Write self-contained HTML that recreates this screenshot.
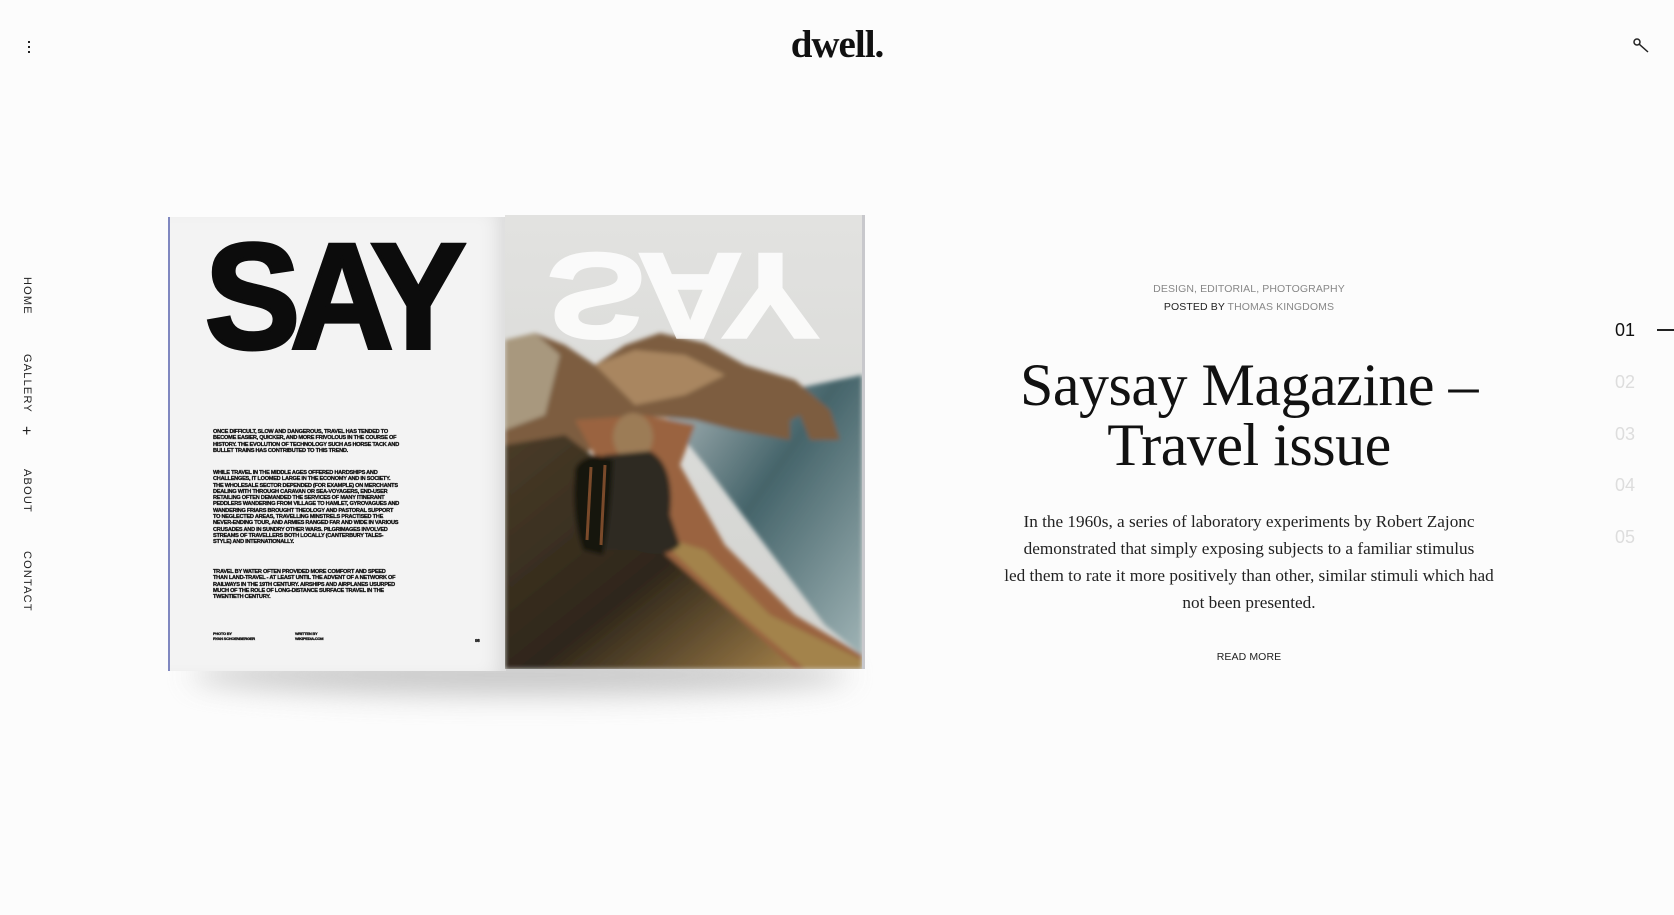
<!DOCTYPE html>
<html><head><meta charset="utf-8"><style>
*{margin:0;padding:0;box-sizing:border-box}
html,body{width:1674px;height:915px;overflow:hidden;background:#fcfcfc;font-family:"Liberation Sans",sans-serif;color:#111}
.abs{position:absolute}
.logo{left:0;width:1674px;top:22px;text-align:center;font-family:"Liberation Serif",serif;font-weight:bold;font-size:39px;letter-spacing:-1px;color:#111}
.nav{left:21px;writing-mode:vertical-rl;font-size:11px;letter-spacing:1.2px;color:#222}
.cat{left:989px;width:520px;text-align:center;font-size:10.5px;letter-spacing:.1px;color:#888}
.title{left:949px;width:600px;text-align:center;font-family:"Liberation Serif",serif;font-size:60px;line-height:60px;letter-spacing:-0.5px;color:#111;top:355px}
.body{left:996px;width:506px;text-align:center;font-family:"Liberation Serif",serif;font-size:17.2px;line-height:27px;color:#222;top:508px}
.num{left:1615px;width:30px;font-size:18px;color:#ddd}
.tiny{font-size:5.6px;line-height:6.3px;font-weight:bold;color:#111;width:188px;letter-spacing:-.25px;-webkit-text-stroke:.3px #111}
</style></head><body>
<div class="abs" style="left:28px;top:41px;width:2px;height:2px;background:#222"></div>
<div class="abs" style="left:28px;top:46px;width:2px;height:2px;background:#222"></div>
<div class="abs" style="left:28px;top:51px;width:2px;height:2px;background:#222"></div>
<div class="abs logo">dwell.</div>
<svg class="abs" style="left:1630px;top:34px" width="22" height="22" viewBox="0 0 22 22"><circle cx="7" cy="8" r="3" fill="none" stroke="#222" stroke-width="1.5"/><line x1="9.2" y1="10.2" x2="18" y2="18" stroke="#222" stroke-width="1.5"/></svg>

<div class="abs nav" style="top:277px">HOME</div>
<div class="abs nav" style="top:354px">GALLERY</div>
<div class="abs" style="left:22px;top:424px;font-size:16px;line-height:1;color:#222">+</div>
<div class="abs nav" style="top:469px">ABOUT</div>
<div class="abs nav" style="top:551px">CONTACT</div>

<div class="abs" style="left:190px;top:655px;width:660px;height:40px;border-radius:50%;background:#bbb;filter:blur(14px);opacity:.8"></div>
<div class="abs" style="left:168px;top:217px;width:338px;height:454px;background:#f3f3f3;border-left:2px solid #8088c0;box-shadow:inset -18px 0 20px -12px rgba(0,0,0,.12)"></div>
<div class="abs" style="left:505px;top:215px;width:360px;height:454px;background:#ddd;border-right:3px solid #c8c8cc;overflow:hidden">
<svg width="357" height="454" viewBox="0 0 357 454">
<defs>
<linearGradient id="sky" x1="0" y1="0" x2="0" y2="1"><stop offset="0" stop-color="#e2e2e0"/><stop offset="1" stop-color="#d2d3d0"/></linearGradient>
<linearGradient id="sea" x1="0" y1="0" x2="1" y2="1"><stop offset="0" stop-color="#b4bec0"/><stop offset=".45" stop-color="#45646a"/><stop offset="1" stop-color="#9fb3b5"/></linearGradient>
<linearGradient id="grass" x1="0" y1="0" x2="1" y2="1"><stop offset="0" stop-color="#4a3c28"/><stop offset=".55" stop-color="#2e261a"/><stop offset="1" stop-color="#a07e48"/></linearGradient>
<filter id="b"><feGaussianBlur stdDeviation="2.5"/></filter>
</defs>
<rect width="357" height="454" fill="url(#sky)"/>
<g filter="url(#b)">
<polygon points="160,200 357,160 357,440 320,410 260,330 200,250" fill="url(#sea)"/>
<polygon points="0,125 30,118 60,130 90,150 120,130 155,118 200,128 240,150 290,165 325,195 335,225 305,225 295,200 285,205 285,225 230,215 190,205 130,200 90,230 60,260 0,280" fill="#7d5d40"/>
<polygon points="0,125 30,118 55,140 40,200 0,215" fill="#a8987e"/>
<polygon points="90,150 130,135 180,140 220,160 180,180 130,190" fill="#a98660"/>
<polygon points="70,205 140,200 190,210 175,250 220,330 290,400 357,440 357,454 250,454 150,330 100,260" fill="#9a6440"/>
<polygon points="0,230 60,220 100,250 150,330 230,400 290,454 0,454" fill="url(#grass)"/>
<polygon points="150,320 230,395 300,454 357,454 357,445 265,400 200,335" fill="#a3834c"/>
<ellipse cx="128" cy="222" rx="20" ry="24" fill="#9c7c56"/>
<path d="M80,290 Q75,250 100,240 L145,236 Q170,250 165,300 L175,330 Q160,345 130,335 L100,335 Q75,325 80,290Z" fill="#2e2a20"/>
<path d="M70,260 Q68,245 92,240 L108,245 Q106,300 98,340 L78,335 Q66,300 70,260Z" fill="#141210"/>
</g>
<line x1="86" y1="252" x2="82" y2="325" stroke="#7a4a2a" stroke-width="3"/>
<line x1="100" y1="250" x2="96" y2="330" stroke="#7a4a2a" stroke-width="3"/>
</svg>
<div class="abs" style="left:42px;top:6px;font-weight:900;font-size:148px;line-height:148px;color:#fff;opacity:.85;transform:scaleY(-0.82);transform-origin:0 74px;letter-spacing:-9px;-webkit-text-stroke:3px #fff">SAY</div>
</div>
<div class="abs" style="left:205px;top:221px;font-weight:900;font-size:150px;line-height:150px;color:#0c0c0c;letter-spacing:-10px;transform:scaleX(.95);transform-origin:0 0;-webkit-text-stroke:4px #0c0c0c">SAY</div>
<div class="abs tiny" style="left:213px;top:429px">ONCE DIFFICULT, SLOW AND DANGEROUS, TRAVEL HAS TENDED TO BECOME EASIER, QUICKER, AND MORE FRIVOLOUS IN THE COURSE OF HISTORY. THE EVOLUTION OF TECHNOLOGY SUCH AS HORSE TACK AND BULLET TRAINS HAS CONTRIBUTED TO THIS TREND.</div>
<div class="abs tiny" style="left:213px;top:470px">WHILE TRAVEL IN THE MIDDLE AGES OFFERED HARDSHIPS AND CHALLENGES, IT LOOMED LARGE IN THE ECONOMY AND IN SOCIETY. THE WHOLESALE SECTOR DEPENDED (FOR EXAMPLE) ON MERCHANTS DEALING WITH THROUGH CARAVAN OR SEA-VOYAGERS, END-USER RETAILING OFTEN DEMANDED THE SERVICES OF MANY ITINERANT PEDDLERS WANDERING FROM VILLAGE TO HAMLET, GYROVAGUES AND WANDERING FRIARS BROUGHT THEOLOGY AND PASTORAL SUPPORT TO NEGLECTED AREAS, TRAVELLING MINSTRELS PRACTISED THE NEVER-ENDING TOUR, AND ARMIES RANGED FAR AND WIDE IN VARIOUS CRUSADES AND IN SUNDRY OTHER WARS. PILGRIMAGES INVOLVED STREAMS OF TRAVELLERS BOTH LOCALLY (CANTERBURY TALES-STYLE) AND INTERNATIONALLY.</div>
<div class="abs tiny" style="left:213px;top:569px">TRAVEL BY WATER OFTEN PROVIDED MORE COMFORT AND SPEED THAN LAND-TRAVEL - AT LEAST UNTIL THE ADVENT OF A NETWORK OF RAILWAYS IN THE 19TH CENTURY. AIRSHIPS AND AIRPLANES USURPED MUCH OF THE ROLE OF LONG-DISTANCE SURFACE TRAVEL IN THE TWENTIETH CENTURY.</div>
<div class="abs tiny" style="left:213px;top:632px;font-size:4px;line-height:4.5px;width:60px">PHOTO BY<br>RYAN SCHOENBERGER</div>
<div class="abs tiny" style="left:295px;top:632px;font-size:4px;line-height:4.5px;width:60px">WRITTEN BY<br>WIKIPEDIA.COM</div>
<div class="abs tiny" style="left:475px;top:638px;font-size:4.5px;width:10px">98</div>

<div class="abs cat" style="top:283px">DESIGN, EDITORIAL, PHOTOGRAPHY</div>
<div class="abs cat" style="top:301px"><span style="color:#222">POSTED BY</span> THOMAS KINGDOMS</div>
<div class="abs title">Saysay Magazine –<br>Travel issue</div>
<div class="abs body">In the 1960s, a series of laboratory experiments by Robert Zajonc demonstrated that simply exposing subjects to a familiar stimulus<br>led them to rate it more positively than other, similar stimuli which had not been presented.</div>
<div class="abs cat" style="top:651px;color:#222">READ MORE</div>

<div class="abs num" style="top:320px;color:#111">01</div>
<div class="abs" style="left:1657px;top:329px;width:17px;height:1.5px;background:#222"></div>
<div class="abs num" style="top:372px">02</div>
<div class="abs num" style="top:424px">03</div>
<div class="abs num" style="top:475px">04</div>
<div class="abs num" style="top:527px">05</div>
</body></html>
